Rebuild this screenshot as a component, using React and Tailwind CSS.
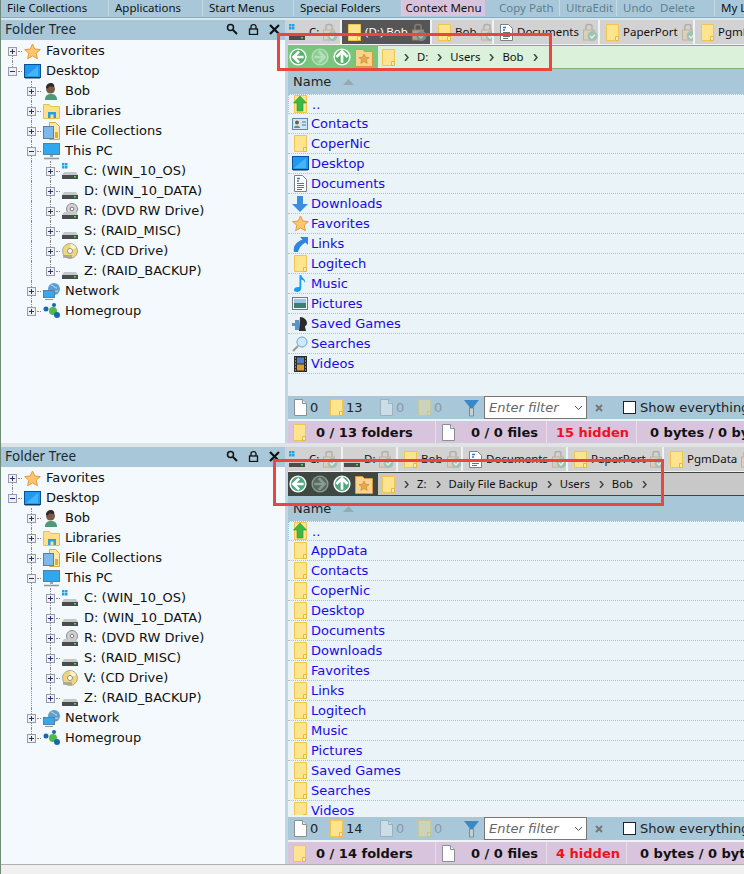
import React from "react";

const uiFont = "font-[Noto_Sans,sans-serif]";
const treeFont = "font-[DejaVu_Sans,sans-serif]";

function Folder({ faded }) {
  return (
    <svg width="13" height="17" viewBox="0 0 13 17" className={"shrink-0 " + (faded ? "opacity-40" : "")}>
      <path d="M.5.5h12v16H.5z" fill="#ffe48f" stroke="#f2c64e" />
      <path d="M9.500 16.500v-4h3v4z" fill="#ffedb5" stroke="#e8b83e" />
    </svg>
  );
}

function Doc({ faded }) {
  return (
    <svg width="13" height="17" viewBox="0 0 13 17" className={"shrink-0 " + (faded ? "opacity-40" : "")}>
      <path d="M.5.5h8l4 4v12H.5z" fill="#fff" stroke="#8a8f94" />
      <path d="M8.500.5v4h4" fill="#e4e8ea" stroke="#8a8f94" />
    </svg>
  );
}

function DocLines() {
  return (
    <svg width="13" height="17" viewBox="0 0 13 17" className="shrink-0">
      <path d="M.5.5h8l4 4v12H.5z" fill="#fff" stroke="#7b8085" />
      <path d="M3 3.500h3M3 6h2" stroke="#2a7bd0" strokeWidth="1.400" />
      <path d="M3 8.500h7M3 10.500h7M3 12.500h7M3 14.500h5" stroke="#6b7075" />
    </svg>
  );
}

function Star() {
  return (
    <svg width="17" height="17" viewBox="0 0 17 17" className="shrink-0">
      <path d="M8.500 1l2.300 5 5.500.6-4.100 3.700 1.200 5.400-4.900-2.800-4.900 2.800 1.200-5.400L.7 6.600 6.200 6z" fill="#ffc66e" stroke="#e69a3a" />
    </svg>
  );
}

function DesktopIcon() {
  return (
    <svg width="17" height="15" viewBox="0 0 17 15" className="shrink-0">
      <rect x=".5" y=".5" width="16" height="13" fill="#1e9af0" stroke="#0b4f96" />
      <path d="M1 13h15v1.500H1z" fill="#123a66" />
      <path d="M2 12L14 2v10z" fill="#45b4f8" />
    </svg>
  );
}

function UserIcon() {
  return (
    <svg width="16" height="17" viewBox="0 0 16 17" className="shrink-0">
      <path d="M2 17c0-5 3-6 6-6s6 1 6 6z" fill="#4d9a78" />
      <circle cx="7.500" cy="6" r="4.500" fill="#7b5a45" />
      <path d="M3 5c0-4 3-5 5-5s4 2 3 4c-2 0-4-1-5 0s-1 2-3 1z" fill="#2f2a28" />
    </svg>
  );
}

function Libraries() {
  return (
    <svg width="17" height="16" viewBox="0 0 17 16" className="shrink-0">
      <path d="M.5 1.500h6l1 2h9v12H.5z" fill="#ffe08a" stroke="#e8c050" />
      <path d="M5 15V9h8v6h-2.500v-3.500h-3V15z" fill="#2b9fe0" />
    </svg>
  );
}

function Collections() {
  return (
    <svg width="17" height="18" viewBox="0 0 17 18" className="shrink-0">
      <path d="M6.500.5h6l4 4v13h-10z" fill="#ffe9a8" stroke="#d8a93c" />
      <rect x=".5" y="4.500" width="10" height="12" fill="#7db9ec" stroke="#5d7f9c" />
      <path d="M12 10h3v6h-3z" fill="#e5a93a" />
    </svg>
  );
}

function Pc() {
  return (
    <svg width="17" height="17" viewBox="0 0 17 17" className="shrink-0">
      <rect x=".5" y=".5" width="16" height="11" fill="#30a8f0" stroke="#5f7f96" />
      <path d="M7 12h3v2H7z" fill="#9aa8b0" />
      <path d="M1 15.500h15" stroke="#8a979e" strokeWidth="1.500" />
    </svg>
  );
}

function Drive({ kind }) {
  return (
    <svg width="16" height="17" viewBox="0 0 16 17" className="shrink-0">
      {kind === "os" && (
        <g fill="#1aa5ea">
          <rect x="0" y="0" width="2.500" height="2.500" />
          <rect x="3" y="0" width="2.500" height="2.500" />
          <rect x="0" y="3" width="2.500" height="2.500" />
          <rect x="3" y="3" width="2.500" height="2.500" />
        </g>
      )}
      {kind === "dvd" && (
        <g>
          <circle cx="10" cy="6" r="5.500" fill="#d2d2d2" stroke="#8c8c8c" />
          <circle cx="10" cy="6" r="1.800" fill="#fff" stroke="#777" />
        </g>
      )}
      <path d="M2 9h12l2 3H0z" fill="#c4c8c8" />
      <rect x="0" y="12" width="16" height="4" fill="#4b4d4d" />
      <rect x="12" y="13" width="2" height="1.500" fill="#45e045" />
    </svg>
  );
}

function Cd() {
  return (
    <svg width="16" height="16" viewBox="0 0 16 16" className="shrink-0">
      <circle cx="8" cy="8" r="7.500" fill="#efd777" stroke="#a9a9a0" />
      <path d="M8 1a7 7 0 0 1 6 4L9 7z" fill="#fff6c8" />
      <circle cx="8" cy="8" r="2.500" fill="#fff" stroke="#8f8f8f" />
      <rect x="1" y="12" width="9" height="3" fill="#999" opacity=".7" />
    </svg>
  );
}

function NetworkIcon() {
  return (
    <svg width="17" height="17" viewBox="0 0 17 17" className="shrink-0">
      <circle cx="11" cy="6" r="6" fill="#5aa0d2" />
      <path d="M8 2c3 0 3 3 6 3M7 8c3-1 5 1 8 0" stroke="#c4e0f2" fill="none" />
      <rect x=".5" y="7.500" width="11" height="7" fill="#35a8ee" stroke="#5f7f96" />
      <path d="M2 16.500h8" stroke="#8a979e" />
    </svg>
  );
}

function Homegroup() {
  return (
    <svg width="17" height="16" viewBox="0 0 17 16" className="shrink-0">
      <circle cx="3" cy="6" r="2.500" fill="#1c66b0" />
      <circle cx="11" cy="2" r="2" fill="#1c66b0" />
      <circle cx="10" cy="8" r="4" fill="#54b948" />
      <circle cx="14" cy="12" r="3" fill="#1c66b0" />
    </svg>
  );
}

function Contacts() {
  return (
    <svg width="16" height="12" viewBox="0 0 16 12" className="shrink-0">
      <rect x=".5" y=".5" width="15" height="11" fill="#d4e6f4" stroke="#5f88aa" />
      <circle cx="5" cy="4.500" r="2" fill="#7b5a45" />
      <path d="M2 10c0-3 6-3 6 0z" fill="#4d9a78" />
      <path d="M10 4h4M10 7h4" stroke="#3a78b0" />
    </svg>
  );
}

function Download() {
  return (
    <svg width="16" height="16" viewBox="0 0 16 16" className="shrink-0">
      <path d="M5 0h6v8h5l-8 8-8-8h5z" fill="#3a8ee0" />
    </svg>
  );
}

function LinkIcon() {
  return (
    <svg width="16" height="16" viewBox="0 0 16 16" className="shrink-0">
      <path d="M8 1h8v8l-2.500-2.500C9 9 7 12 6 16H2C1 10 4 6 10.500 3.500z" fill="#2f86dc" />
    </svg>
  );
}

function MusicIcon() {
  return (
    <svg width="13" height="17" viewBox="0 0 13 17" className="shrink-0">
      <path d="M5.500 0h1.800c.2 3 5 4 3.700 8-.5-2-2-3.200-3.700-3.500V13c0 2.500-2 4-4.300 4C1 17 0 16 0 14.700c0-1.700 2-3 5.500-2.700z" fill="#1a9cf0" />
    </svg>
  );
}

function PicturesIcon() {
  return (
    <svg width="16" height="13" viewBox="0 0 16 13" className="shrink-0">
      <rect x=".5" y=".5" width="15" height="12" fill="#f4f4f4" stroke="#777" />
      <rect x="2" y="2" width="12" height="4" fill="#9cc8e8" />
      <rect x="2" y="6" width="12" height="5" fill="#3f7f70" />
    </svg>
  );
}

function Games() {
  return (
    <svg width="16" height="16" viewBox="0 0 16 16" className="shrink-0">
      <path d="M0 7h3V4h4v10H3v-4H0z" fill="#5b93c4" />
      <path d="M8 1c4 0 7 3 7 6s-2 2-2 4l1 4H7z" fill="#2c2c2c" />
    </svg>
  );
}

function Searches() {
  return (
    <svg width="16" height="16" viewBox="0 0 16 16" className="shrink-0">
      <path d="M1 15l5-5" stroke="#9a9a8e" strokeWidth="2" />
      <circle cx="10" cy="6" r="5" fill="#cfe8fa" stroke="#6ea4cc" />
    </svg>
  );
}

function Film() {
  return (
    <svg width="13" height="16" viewBox="0 0 13 16" className="shrink-0">
      <rect width="13" height="16" fill="#2b2b2b" />
      <rect x="3" y="1.500" width="7" height="6" fill="#4f7fc8" />
      <rect x="3" y="8.500" width="7" height="6" fill="#d8a030" />
      <path d="M1 2h1M1 5h1M1 8h1M1 11h1M1 14h1M11 2h1M11 5h1M11 8h1M11 11h1M11 14h1" stroke="#ddd" />
    </svg>
  );
}

function UpFolder() {
  return (
    <svg width="16" height="18" viewBox="0 0 16 18" className="shrink-0">
      <path d="M1.500.5h12v17h-12z" fill="#ffe48f" stroke="#f2c64e" />
      <path d="M7 1l6.500 7H10v8H4V8H.5z" fill="#3fb83f" stroke="#2f9030" strokeWidth=".6" />
    </svg>
  );
}

function Lock() {
  return (
    <svg width="15" height="19" viewBox="0 0 15 19" className="shrink-0 opacity-60">
      <path d="M3 8V3C3 1 9 1 9 3v5" fill="none" stroke="#999" strokeWidth="1.500" />
      <rect x=".5" y="7" width="11" height="10" fill="#e4d0b0" stroke="#b89c78" />
      <circle cx="9.500" cy="13" r="5" fill="#7fb8a0" />
      <path d="M7 13l2 2L12 11.500" stroke="#fff" fill="none" strokeWidth="1.300" />
    </svg>
  );
}

function Expander({ open }) {
  return (
    <span className="flex h-[9px] w-[9px] shrink-0 items-center justify-center border border-[#9a9aa8] bg-[#eef0f4]">
      <svg width="7" height="7" viewBox="0 0 7 7">
        <path d={open ? "M1 3.500h5" : "M1 3.500h5M3.500 1v5"} stroke="#2a2f7a" />
      </svg>
    </span>
  );
}

const treeRows = [
  { level: 0, label: "Favorites", icon: <Star />, guide: "down" },
  { level: 0, label: "Desktop", icon: <DesktopIcon />, open: true, guide: "up" },
  { level: 1, label: "Bob", icon: <UserIcon /> },
  { level: 1, label: "Libraries", icon: <Libraries /> },
  { level: 1, label: "File Collections", icon: <Collections /> },
  { level: 1, label: "This PC", icon: <Pc />, open: true },
  { level: 2, label: "C: (WIN_10_OS)", icon: <Drive kind="os" /> },
  { level: 2, label: "D: (WIN_10_DATA)", icon: <Drive /> },
  { level: 2, label: "R: (DVD RW Drive)", icon: <Drive kind="dvd" /> },
  { level: 2, label: "S: (RAID_MISC)", icon: <Drive /> },
  { level: 2, label: "V: (CD Drive)", icon: <Cd /> },
  { level: 2, label: "Z: (RAID_BACKUP)", icon: <Drive />, last: true },
  { level: 1, label: "Network", icon: <NetworkIcon /> },
  { level: 1, label: "Homegroup", icon: <Homegroup />, last: true },
];

function TreeRow({ row }) {
  return (
    <div className="relative flex h-5 items-center">
      {row.guide === "down" && <span className="absolute left-[11px] top-[10px] h-[10px] border-l border-dotted border-[#888]" />}
      {row.guide === "up" && <span className="absolute left-[11px] top-0 h-[10px] border-l border-dotted border-[#888]" />}
      {row.level >= 1 && <span className={"absolute left-[30px] top-0 border-l border-dotted border-[#888] " + (row.last && row.level === 1 ? "h-[10px]" : "h-5")} />}
      {row.level === 2 && <span className={"absolute left-[49px] top-0 border-l border-dotted border-[#888] " + (row.last ? "h-[10px]" : "h-5")} />}
      <div className={"relative flex items-center " + (row.level === 0 ? "pl-[7px]" : row.level === 1 ? "pl-[26px]" : "pl-[45px]")}>
        <Expander open={row.open} />
        <span className="ml-[1px] w-[4px] border-t border-dotted border-[#888]" />
        <span className="flex w-[20px] justify-center">{row.icon}</span>
        <span className="pl-[4px] text-[13px] text-[#111]">{row.label}</span>
      </div>
    </div>
  );
}

function FolderTree() {
  return (
    <div className={"flex w-[284px] shrink-0 flex-col bg-[#f3f9fc] " + treeFont}>
      <div className={"flex h-5 items-center justify-between bg-[#a8c8d9] pb-[2px] pl-[4px] pr-[5px] text-[13.500px] text-[#1c2a33] " + uiFont}>
        <span>Folder Tree</span>
        <div className="flex items-center gap-[10px]">
          <svg width="12" height="12" viewBox="0 0 12 12">
            <circle cx="4.500" cy="4.500" r="3" fill="none" stroke="#111" strokeWidth="1.500" />
            <path d="M7 7l4 4" stroke="#111" strokeWidth="2" />
          </svg>
          <svg width="11" height="12" viewBox="0 0 11 12">
            <path d="M3 6V3.500C3 1 8 1 8 3.500V6" fill="none" stroke="#111" strokeWidth="1.300" />
            <rect x="1.500" y="6" width="8" height="5.500" fill="none" stroke="#111" strokeWidth="1.300" />
          </svg>
          <svg width="11" height="11" viewBox="0 0 11 11">
            <path d="M1 1l9 9M10 1l-9 9" stroke="#111" strokeWidth="2.200" />
          </svg>
        </div>
      </div>
      <div className="flex-1 pt-[1px]">
        {treeRows.map((row) => (
          <TreeRow key={row.label} row={row} />
        ))}
      </div>
    </div>
  );
}

function Tab({ width, icon, label, active, tight }) {
  return (
    <div
      className={
        "flex shrink-0 items-center gap-[4px] overflow-hidden border-r-2 border-[#eef2f4] text-[11.500px] " +
        width +
        (tight ? " pl-[1px]" : " pl-[6px]") +
        (active ? " bg-[#555] text-white" : " bg-[#d2d2d2] text-[#111]")
      }
    >
      {icon}
      <span className="whitespace-nowrap">{label}</span>
      <Lock />
    </div>
  );
}

function NavCircle({ dir, dim, dark }) {
  const fill = dim ? (dark ? "#59695f" : "#8fcc94") : dark ? "#4fa77f" : "#55b26a";
  const stroke = dim ? (dark ? "#8a9a90" : "#b4e0b8") : "#fff";
  const paths = {
    left: "M9 3L4 8l5 5M4 8h9",
    right: "M7 3l5 5-5 5M12 8H3",
    up: "M3 8l5-5 5 5M8 3v10",
  };
  return (
    <svg width="18" height="18" viewBox="0 0 16 16" className="shrink-0">
      <circle cx="8" cy="8" r="7" fill={fill} stroke={stroke} strokeWidth="1.300" />
      <path d={paths[dir]} fill="none" stroke={stroke} strokeWidth="2.400" />
    </svg>
  );
}

function Chevron() {
  return (
    <svg width="5" height="7" viewBox="0 0 5 7" className="shrink-0">
      <path d="M1 0l3 3.500-3 3.500" fill="none" stroke="#444" strokeWidth="1.500" />
    </svg>
  );
}

function Breadcrumb({ parts, dark }) {
  return (
    <div className="flex h-[24px] items-stretch">
      <div className={"flex w-[90px] shrink-0 items-center gap-[4px] pl-[1px] " + (dark ? "bg-[#3e4742]" : "bg-[#7ac47e]")}>
        <NavCircle dir="left" dark={dark} />
        <NavCircle dir="right" dim dark={dark} />
        <NavCircle dir="up" dark={dark} />
        <svg width="18" height="20" viewBox="0 0 18 20" className="shrink-0">
          <path d="M.5 2.500h7l2 2h8v15H.5z" fill="#fbd38f" stroke="#d89a3c" />
          <path d="M9 7l1.500 3.200 3.500.4-2.600 2.300.8 3.500L9 14.600l-3.200 1.800.8-3.500L4 10.600l3.500-.4z" fill="#e8a84e" stroke="#b87a2a" strokeWidth=".5" />
        </svg>
      </div>
      <div className={"flex flex-1 items-center border-y pl-[4px] text-[11.300px] " + (dark ? "border-[#3e4742] bg-[#c8c8c8] text-[#111]" : "border-[#7ab27a] bg-[#dcf1da] text-[#111]")}>
        <Folder />
        <span className="w-[9px]" />
        {parts.map((part) => (
          <React.Fragment key={part}>
            <Chevron />
            <span className="whitespace-nowrap pl-[8px] pr-[9px]">{part}</span>
          </React.Fragment>
        ))}
        <Chevron />
      </div>
    </div>
  );
}

function ListRow({ icon, label, highlight }) {
  return (
    <div
      className={
        "flex h-5 shrink-0 items-center border-b border-dotted border-[#b8bec2] pl-[2px] text-[13px] text-[#1a0ae6] " +
        (highlight ? "border-t border-l border-t-[#90c8f0] border-l-[#90c8f0]" : "")
      }
    >
      <span className="flex w-[20px] justify-center">{icon}</span>
      <span className="pl-[1px] pt-[1px]">{label}</span>
    </div>
  );
}

function FilterBar({ folders }) {
  return (
    <div className="flex h-[27px] shrink-0 items-center border-y-2 border-[#eef2f4] bg-[#a8c8d9] pl-[6px] text-[13px] text-[#222]">
      <Doc />
      <span className="ml-[3px] w-[20px] shrink-0">0</span>
      <Folder />
      <span className="ml-[3px] w-[34px] shrink-0">{folders}</span>
      <Doc faded />
      <span className="ml-[3px] w-[22px] shrink-0 text-[#8b9aa3]">0</span>
      <Folder faded />
      <span className="ml-[3px] w-[30px] shrink-0 text-[#8b9aa3]">0</span>
      <svg width="15" height="18" viewBox="0 0 15 18" className="shrink-0">
        <path d="M0 1h15L9.500 8v9h-4V8z" fill="#3a88c8" />
        <path d="M5.500 9h4v8h-4z" fill="#c9d0d4" stroke="#667" strokeWidth=".6" />
      </svg>
      <div className="ml-[5px] flex h-[23px] w-[103px] shrink-0 items-center justify-between border border-[#777] bg-white pl-[4px] pr-[3px]">
        <span className="whitespace-nowrap text-[13px] italic text-[#666]">Enter filter</span>
        <svg width="9" height="6" viewBox="0 0 9 6" className="shrink-0">
          <path d="M1 1l3.500 3.500L8 1" fill="none" stroke="#555" />
        </svg>
      </div>
      <svg width="8" height="8" viewBox="0 0 8 8" className="ml-[8px] shrink-0">
        <path d="M1 1l6 6M7 1L1 7" stroke="#777" strokeWidth="2" />
      </svg>
      <span className="ml-[20px] h-[13px] w-[13px] shrink-0 border border-[#222] bg-white" />
      <span className="ml-[4px] whitespace-nowrap">Show everything</span>
    </div>
  );
}

function StatusBar({ folders, hidden, hiddenWidth }) {
  return (
    <div className="flex h-[22px] shrink-0 items-center overflow-hidden bg-[#d8c4dc] text-[13px] font-bold text-[#111]">
      <div className="flex h-full w-[148px] shrink-0 items-center border-r border-[#e8dcea] pl-[5px]">
        <Folder />
        <span className="ml-[10px] whitespace-nowrap pt-[1px]">0 / {folders} folders</span>
      </div>
      <div className="flex h-full w-[111px] shrink-0 items-center border-r border-[#e8dcea] pl-[6px]">
        <Doc />
        <span className="ml-[16px] whitespace-nowrap pt-[1px]">0 / 0 files</span>
      </div>
      <div className={"flex h-full shrink-0 items-center border-r border-[#e8dcea] pl-[9px] pt-[1px] text-[#f01020] " + hiddenWidth}>{hidden} hidden</div>
      <span className="ml-[13px] whitespace-nowrap pt-[1px]">0 bytes / 0 bytes</span>
    </div>
  );
}

function Pane({ tabs, crumbs, crumbDark, rows, folders, hidden, hiddenWidth, listHeight }) {
  return (
    <div className="flex shrink-0">
      <FolderTree />
      <div className="w-[3px] shrink-0 bg-[#c3d5df]" />
      <div className={"flex min-w-0 flex-1 flex-col overflow-hidden bg-[#a8c8d9] " + treeFont}>
        <div className={"flex h-[25px] shrink-0 border-b border-[#eef2f4] " + uiFont}>
          {tabs.map((t) => (
            <Tab key={t.label + t.width} {...t} />
          ))}
        </div>
        <div className={uiFont}>
          <Breadcrumb parts={crumbs} dark={crumbDark} />
        </div>
        <div className="flex h-[25px] shrink-0 items-center gap-[12px] pl-[5px] pt-[1px] text-[13px] text-[#222]">
          <span>Name</span>
          <svg width="11" height="6" viewBox="0 0 11 6">
            <path d="M5.500 0L11 6H0z" fill="#96a8b2" />
          </svg>
        </div>
        <div className={"flex flex-col overflow-hidden bg-[#eaf3f7] " + listHeight}>
          {rows.map((r) => (
            <ListRow key={r.label} {...r} />
          ))}
        </div>
        <FilterBar folders={folders} />
        <StatusBar folders={folders} hidden={hidden} hiddenWidth={hiddenWidth} />
      </div>
    </div>
  );
}

const topTabs = [
  { width: "w-[54px]", icon: <Drive kind="os" />, label: "C:", tight: true },
  { width: "w-[90px]", icon: <Folder />, label: "(D:) Bob", active: true },
  { width: "w-[62px]", icon: <Folder />, label: "Bob" },
  { width: "w-[106px]", icon: <DocLines />, label: "Documents" },
  { width: "w-[95px]", icon: <Folder />, label: "PaperPort" },
  { width: "w-[80px]", icon: <Folder />, label: "PgmData" },
];

const bottomTabs = [
  { width: "w-[55px]", icon: <Drive kind="os" />, label: "C:", tight: true },
  { width: "w-[55px]", icon: <Drive />, label: "D:", tight: true },
  { width: "w-[65px]", icon: <Folder />, label: "Bob" },
  { width: "w-[105px]", icon: <DocLines />, label: "Documents" },
  { width: "w-[96px]", icon: <Folder />, label: "PaperPort" },
  { width: "w-[95px]", icon: <Folder />, label: "PgmData" },
];

const topRows = [
  { icon: <UpFolder />, label: "..", highlight: true },
  { icon: <Contacts />, label: "Contacts" },
  { icon: <Folder />, label: "CoperNic" },
  { icon: <DesktopIcon />, label: "Desktop" },
  { icon: <DocLines />, label: "Documents" },
  { icon: <Download />, label: "Downloads" },
  { icon: <Star />, label: "Favorites" },
  { icon: <LinkIcon />, label: "Links" },
  { icon: <Folder />, label: "Logitech" },
  { icon: <MusicIcon />, label: "Music" },
  { icon: <PicturesIcon />, label: "Pictures" },
  { icon: <Games />, label: "Saved Games" },
  { icon: <Searches />, label: "Searches" },
  { icon: <Film />, label: "Videos" },
];

const bottomRows = [
  { icon: <UpFolder />, label: "..", highlight: true },
  ...["AppData", "Contacts", "CoperNic", "Desktop", "Documents", "Downloads", "Favorites", "Links", "Logitech", "Music", "Pictures", "Saved Games", "Searches", "Videos"].map((label) => ({
    icon: <Folder />,
    label,
  })),
];

const menu = [
  { label: "File Collections", width: "w-[108px]" },
  { label: "Applications", width: "w-[94px]" },
  { label: "Start Menus", width: "w-[91px]" },
  { label: "Special Folders", width: "w-[108px]" },
  { label: "Context Menu", width: "w-[83px]", active: true },
  { label: "Copy Path", width: "w-[75px]", dim: true, pad: "pl-[14px]" },
  { label: "UltraEdit", width: "w-[57px]", dim: true },
  { label: "Undo", width: "w-[37px]", dim: true, noLine: true },
  { label: "Delete", width: "w-[61px]", dim: true },
  { label: "My Libraries", width: "w-[60px]" },
];

export default function App() {
  return (
    <div className="relative flex h-[874px] w-[744px] flex-col overflow-hidden border-l border-[#6f8a78] bg-[#f0f0f0]">
      <div className={"flex h-[18px] shrink-0 items-center overflow-hidden border-b border-[#86aec2] bg-[#a8c8d9] pb-[1px] text-[11.500px] " + uiFont}>
        {menu.map((m) => (
          <div
            key={m.label}
            className={
              "flex h-full shrink-0 items-center whitespace-nowrap " +
              m.width +
              (m.active ? " justify-center bg-[#d8c4dc]" : " " + (m.pad || "pl-[6px]")) +
              (m.noLine || m.active ? "" : " border-r border-[#c4dbe6]") +
              (m.dim ? " text-[#5f7f90]" : " text-[#111]")
            }
          >
            {m.label}
          </div>
        ))}
      </div>
      <div className="h-[2px] shrink-0 bg-[#dde6ea]" />
      <Pane
        tabs={topTabs}
        crumbs={["D:", "Users", "Bob"]}
        rows={topRows}
        folders={13}
        hidden={15}
        hiddenWidth="w-[90px]"
        listHeight="h-[300px]"
      />
      <div className="h-[4px] shrink-0 bg-[#dfe3e4]" />
      <Pane
        tabs={bottomTabs}
        crumbs={["Z:", "Daily File Backup", "Users", "Bob"]}
        crumbDark
        rows={bottomRows}
        folders={14}
        hidden={4}
        hiddenWidth="w-[80px]"
        listHeight="h-[294px]"
      />
      <div className="border-t border-[#b0b0b0]" />
      {/* red boxes the author drew on the screenshot */}
      <div className="absolute left-[276px] top-[33px] h-[38px] w-[275px] border-[3px] border-[#e8463f]" />
      <div className="absolute left-[272px] top-[459px] h-[47px] w-[391px] border-[3px] border-[#e8463f]" />
    </div>
  );
}
